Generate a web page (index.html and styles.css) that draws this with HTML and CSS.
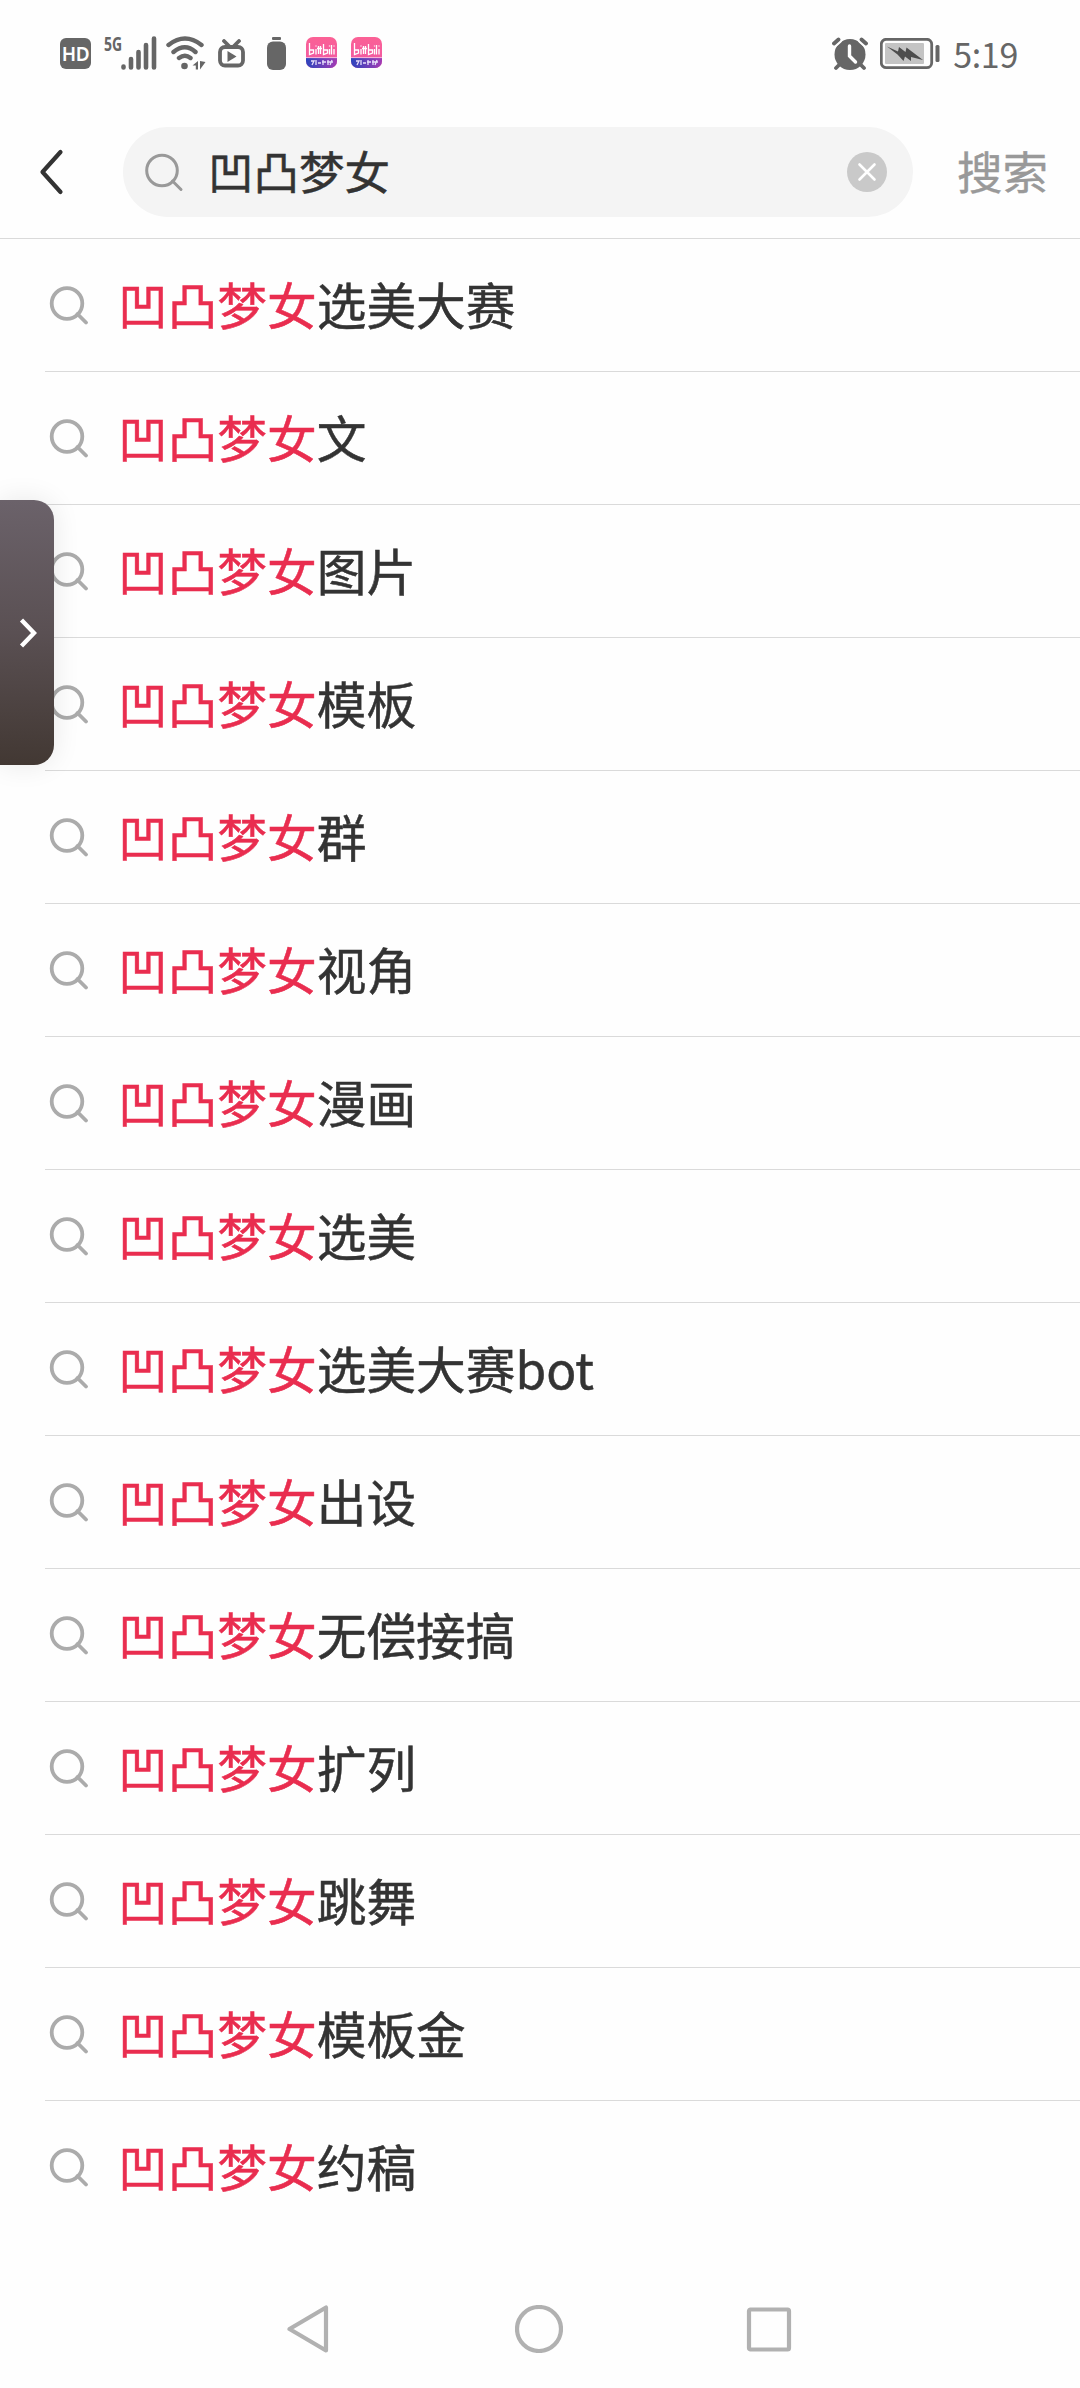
FILE: index.html
```html
<!DOCTYPE html>
<html lang="zh-CN">
<head>
<meta charset="utf-8">
<title>搜索</title>
<link rel="stylesheet" href="styles.css">
</head>
<body>
<svg width="0" height="0" class="defs" aria-hidden="true">
  <defs>
    <symbol id="search" viewBox="0 0 40 40"><circle cx="18" cy="18.500" r="15.300"/><path d="M28.500 29 37 37.500"/></symbol>
    <linearGradient id="pink" x1="0" y1="0" x2="0" y2="1"><stop offset="0" stop-color="#fb6195"/><stop offset="1" stop-color="#ef58a6"/></linearGradient>
    <linearGradient id="blue" x1="0" y1="0" x2="1" y2="0"><stop offset="0" stop-color="#2b45bd"/><stop offset="1" stop-color="#a33cb4"/></linearGradient>
    <clipPath id="round"><rect width="31" height="31" rx="7"/></clipPath>
    <symbol id="app" viewBox="0 0 31 31">
      <g clip-path="url(#round)">
        <rect width="31" height="31" fill="url(#pink)"/>
        <rect y="21" width="31" height="10" fill="url(#blue)"/>
        <path d="M0 20.600H31" stroke="#f7b9dc" stroke-width="1"/>
        <path d="M3.500 6v11.500l4-1.500v-3h-4M10 12v5.500M12.500 9v8M14.500 9v8M11 11.500h5M17.500 7v10.500l4-1.500v-3h-4M23.500 12v5.500M25.500 8v9.500M28 12v5.500M10 8.500v1M23.500 8.500v1M28 8.500v1" fill="none" stroke="#fff" stroke-width="1.300"/>
        <path d="M5 24h3l-2 4M10 23v5M12 26h3M17 23v5M16 25h4M22 23v5M21 25h6M24 28l2-5" fill="none" stroke="#e6defa" stroke-width="1.300"/>
      </g>
    </symbol>
  </defs>
</svg>

<div class="status">
  <div class="status-left">
    <span class="hd">HD</span>
    <span class="net">5G</span>
    <svg class="signal" width="36" height="34" viewBox="0 0 36 34"><path d="M2.500 30.500v1M10 23v8.500M17.500 16v15.500M25 9v22.500M33 2.500v29"/></svg>
    <svg class="wifi" width="40" height="34" viewBox="0 0 40 34"><path d="M2.500 9Q19 -4 35.500 9M7.500 16Q19 6.500 29.500 16M13 22Q19 17.500 24.500 22"/><circle cx="18.500" cy="30" r="3.300"/><path class="solid" d="M32 25v8.500h-2.200v-4h-3.300zM34 25v8.500l5.500-7.500z"/></svg>
    <svg class="tv" width="27" height="29" viewBox="0 0 27 29"><rect x="2" y="8" width="23" height="18.500" rx="5"/><path d="M6 2l5 5M21 2l-5 5"/><path class="solid" d="M9.500 12v11l9-5.500z"/></svg>
    <svg class="cell" width="19" height="33" viewBox="0 0 19 33"><rect x="5" width="9" height="3" rx="1"/><rect y="4.500" width="19" height="28.500" rx="6"/></svg>
    <svg class="app" width="31" height="31"><use href="#app"/></svg>
    <svg class="app" width="31" height="31"><use href="#app"/></svg>
  </div>
  <div class="status-right">
    <svg width="36" height="34" viewBox="0 0 36 34"><circle cx="18" cy="17.500" r="15.500" fill="#666"/><path d="M2 6.500 6.500 2.500M29.500 2.500 34 6.500" stroke="#fefefe" stroke-width="8" stroke-linecap="round"/><path d="M2 6.500 6.500 2.500M29.500 2.500 34 6.500M7 28l-3 3M29 28l3 3" stroke="#666" stroke-width="3.800" stroke-linecap="round"/><path d="M17.500 9v10l6 6" fill="none" stroke="#fff" stroke-width="3.400" stroke-linecap="round"/></svg>
    <svg class="power" width="60" height="32" viewBox="0 0 60 32"><rect x="1.300" y="1.300" width="50.400" height="28.400" rx="5" fill="none" stroke="#666" stroke-width="2.800"/><rect x="5" y="5" width="39" height="21" rx="1" fill="#c4c4c4"/><path d="M7 8.500l11 5 1-4.500 6.500 5 1-4.500L43 22l-12-3v4l-6-4.500-1.500 4.500-6-6.500z" fill="#4d4d4d"/><rect x="55.500" y="7" width="4" height="17" rx="1.500" fill="#666"/></svg>
    <span class="time">5:19</span>
  </div>
</div>

<header class="header">
  <svg class="back" width="26" height="46" viewBox="0 0 26 46"><path d="M21.500 3 3.500 23 21.500 43"/></svg>
  <div class="field">
    <svg class="glass" width="40" height="40"><use href="#search"/></svg>
    <span class="query">凹凸梦女</span>
    <svg class="clear" width="40" height="40" viewBox="0 0 40 40"><circle cx="20" cy="20" r="20"/><path d="M12.500 12.500l15 15M27.500 12.500l-15 15"/></svg>
  </div>
  <span class="submit">搜索</span>
</header>

<ul class="list">
  <li><svg class="icon"><use href="#search"/></svg><p><em>凹凸梦女</em>选美大赛</p></li>
  <li><svg class="icon"><use href="#search"/></svg><p><em>凹凸梦女</em>文</p></li>
  <li><svg class="icon"><use href="#search"/></svg><p><em>凹凸梦女</em>图片</p></li>
  <li><svg class="icon"><use href="#search"/></svg><p><em>凹凸梦女</em>模板</p></li>
  <li><svg class="icon"><use href="#search"/></svg><p><em>凹凸梦女</em>群</p></li>
  <li><svg class="icon"><use href="#search"/></svg><p><em>凹凸梦女</em>视角</p></li>
  <li><svg class="icon"><use href="#search"/></svg><p><em>凹凸梦女</em>漫画</p></li>
  <li><svg class="icon"><use href="#search"/></svg><p><em>凹凸梦女</em>选美</p></li>
  <li><svg class="icon"><use href="#search"/></svg><p><em>凹凸梦女</em>选美大赛bot</p></li>
  <li><svg class="icon"><use href="#search"/></svg><p><em>凹凸梦女</em>出设</p></li>
  <li><svg class="icon"><use href="#search"/></svg><p><em>凹凸梦女</em>无偿接搞</p></li>
  <li><svg class="icon"><use href="#search"/></svg><p><em>凹凸梦女</em>扩列</p></li>
  <li><svg class="icon"><use href="#search"/></svg><p><em>凹凸梦女</em>跳舞</p></li>
  <li><svg class="icon"><use href="#search"/></svg><p><em>凹凸梦女</em>模板金</p></li>
  <li><svg class="icon"><use href="#search"/></svg><p><em>凹凸梦女</em>约稿</p></li>
</ul>

<nav class="nav">
  <svg width="48" height="48" viewBox="0 0 48 48"><path d="M41 2.500V45.500L4.500 24z"/></svg>
  <svg width="48" height="48" viewBox="0 0 48 48"><circle cx="24" cy="24" r="22"/></svg>
  <svg width="48" height="48" viewBox="0 0 48 48"><rect x="4" y="4.500" width="40" height="40" rx="1.500"/></svg>
</nav>

<div class="drawer"><svg width="18" height="30" viewBox="0 0 18 30"><path d="M2.500 2 15 15 2.500 28"/></svg></div>
</body>
</html>
```

FILE: styles.css
```css
* { box-sizing: border-box; }

body {
  margin: 0;
  width: 1080px;
  height: 2388px;
  position: relative;
  display: flex;
  flex-direction: column;
  overflow: hidden;
  background: #fefefe;
  color: #333;
  font-family: "Noto Sans CJK SC", sans-serif;
}

svg { display: block; flex: none; }
.defs { position: absolute; }

/* Status bar */
.status {
  height: 108px;
  padding: 36px 62px 0 60px;
  display: flex;
  justify-content: space-between;
  color: #666;
  fill: #666;
}
.status-left, .status-right { display: flex; align-items: flex-start; }
.hd {
  width: 31px;
  height: 31px;
  margin-top: 2px;
  border-radius: 6px;
  background: #666;
  color: #fff;
  font: 600 19px/32px "Noto Sans", sans-serif;
  letter-spacing: -0.5px;
  text-align: center;
}
.net {
  width: 17px;
  margin-left: 13px;
  font: 700 20px/16px "Open Sans", sans-serif;
  transform: scaleX(.7);
  transform-origin: left;
}
.signal { stroke: #666; stroke-width: 4.6; stroke-linecap: round; }
.wifi { margin-left: 9px; }
.wifi path:not(.solid) { fill: none; stroke: #666; stroke-width: 4.4; stroke-linecap: round; }
.tv { margin: 3px 0 0 12px; fill: none; stroke: #666; stroke-width: 3.8; stroke-linecap: round; }
.tv .solid { fill: #666; stroke: none; }
.cell { margin: 1px 0 0 22px; }
.app { margin: 1px 0 0 20px; }
.app + .app { margin-left: 14px; }
.status-right svg { margin-top: 1px; }
.status-right .power { margin: 2px 0 0 12px; }
.time {
  margin-left: 13px;
  font-size: 34px;
  line-height: 36px;
  letter-spacing: -0.3px;
}

/* Search header */
.header {
  height: 131px;
  padding: 19px 31px 0 39px;
  display: flex;
  align-items: flex-start;
  border-bottom: 1px solid #dadada;
}
.back { margin-top: 22px; fill: none; stroke: #333; stroke-width: 4.2; stroke-linecap: round; stroke-linejoin: round; }
.field {
  width: 790px;
  height: 90px;
  margin-left: 58px;
  padding: 0 26px 0 21px;
  display: flex;
  align-items: center;
  border-radius: 45px;
  background: #f4f4f4;
}
.glass { fill: none; stroke: #999; stroke-width: 3; stroke-linecap: round; }
.query { flex: 1; margin-left: 24px; font-size: 45.5px; line-height: 87px; height: 90px; -webkit-text-stroke: .5px; }
.clear { fill: #c9c9c9; stroke: #fff; stroke-width: 2.6; stroke-linecap: round; }
.clear circle { stroke: none; }
.submit { margin-left: 44px; color: #999; font-size: 45.5px; line-height: 87px; -webkit-text-stroke: .4px; }

/* Suggestions */
.list { margin: 0; padding: 0 0 0 45px; list-style: none; }
.list li {
  height: 133px;
  display: flex;
  align-items: center;
  border-bottom: 1px solid #dadada;
}
.list li:last-child { border-bottom-color: transparent; }
.icon { width: 40px; height: 40px; margin-left: 4px; fill: none; stroke: #ababab; stroke-width: 3.8; stroke-linecap: round; }
.list p { height: 132px; margin: 0 0 0 29px; font-size: 49.7px; line-height: 129px; white-space: nowrap; -webkit-text-stroke: .5px; }
.list em { font-style: normal; color: #e92d4f; }

/* System navigation */
.nav {
  flex: 1;
  padding: 71px 287px 0 285px;
  display: flex;
  justify-content: space-between;
  fill: none;
  stroke: #b1b1b1;
  stroke-width: 4.2;
  stroke-linejoin: round;
}

/* Edge drawer floating over the list */
.drawer {
  position: absolute;
  left: 0;
  top: 500px;
  width: 54px;
  height: 265px;
  padding-left: 19px;
  display: flex;
  align-items: center;
  border-radius: 0 20px 20px 0;
  background: linear-gradient(#6b626a, #5a5053 50%, #423833);
  box-shadow: 0 0 28px rgba(0, 0, 0, .09);
  fill: none;
  stroke: #fff;
  stroke-width: 4.4;
}
```
